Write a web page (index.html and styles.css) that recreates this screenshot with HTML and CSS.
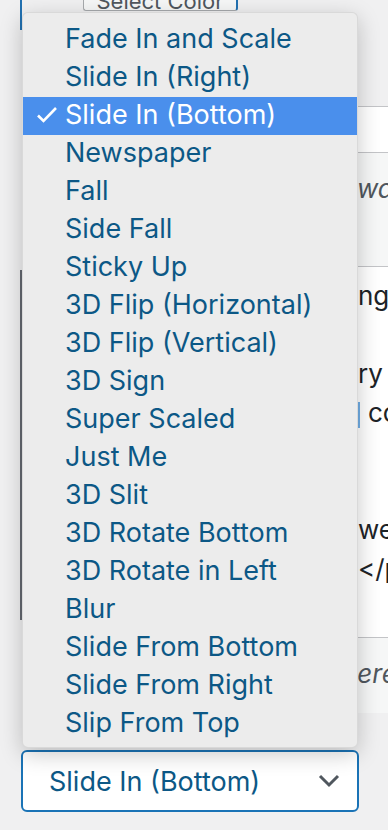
FILE: index.html
```html
<!DOCTYPE html>
<html lang="en">
<head>
  <meta charset="UTF-8">
  <meta name="viewport" content="width=device-width, initial-scale=1.0">
  <title>Popup Animation</title>
  <link rel="stylesheet" href="styles.css">
</head>
<body>
  <div class="screen">
    <div class="toolbar">
      <span class="field-edge"></span>
      <button class="color-btn">Select Color</button>
    </div>
    <div class="spacer"></div>

    <div class="row row-options"></div>

    <div class="row row-note">
      <p class="note">was</p>
    </div>

    <div class="row row-code">
      <div class="code-box">
        <div class="code-line">ng</div>
        <div class="code-line"></div>
        <div class="code-line">ry</div>
        <div class="code-line"><span class="caret"></span>co</div>
        <div class="code-line"></div>
        <div class="code-line"></div>
        <div class="code-line">we</div>
        <div class="code-line">&lt;/p</div>
      </div>
    </div>

    <div class="row row-help">
      <p class="note note-help">here</p>
    </div>

    <div class="picker">
      <span class="picker-value">Slide In (Bottom)</span>
      <svg class="chevron" width="22" height="14" viewBox="0 0 22 14">
        <path d="M2 2 L11 11 L20 2" fill="none" stroke="#50575e" stroke-width="3"/>
      </svg>
    </div>

    <ul class="menu">
      <li>Fade In and Scale</li>
      <li>Slide In (Right)</li>
      <li class="selected">
        <svg class="check" width="22" height="18" viewBox="0 0 22 18">
          <path d="M2 9.5 L7.5 15 L20 2" fill="none" stroke="#fff" stroke-width="2.6"/>
        </svg>Slide In (Bottom)</li>
      <li>Newspaper</li>
      <li>Fall</li>
      <li>Side Fall</li>
      <li>Sticky Up</li>
      <li>3D Flip (Horizontal)</li>
      <li>3D Flip (Vertical)</li>
      <li>3D Sign</li>
      <li>Super Scaled</li>
      <li>Just Me</li>
      <li>3D Slit</li>
      <li>3D Rotate Bottom</li>
      <li>3D Rotate in Left</li>
      <li>Blur</li>
      <li>Slide From Bottom</li>
      <li>Slide From Right</li>
      <li>Slip From Top</li>
    </ul>
  </div>
</body>
</html>
```

FILE: styles.css
```css
body { margin: 0; background: #f0f0f1; font-family: Inter, "Liberation Sans", sans-serif; }

.screen {
  position: relative;
  width: 388px;
  height: 830px;
  overflow: hidden;
  display: flex;
  flex-direction: column;
}

/* top toolbar, mostly hidden behind the menu */
.toolbar { height: 30px; display: flex; align-items: flex-start; margin-left: 20px; }
.field-edge { width: 2px; height: 30px; background: #2271b1; }
.color-btn {
  box-sizing: border-box;
  margin-left: 61px;
  margin-top: -20px;
  width: 155px;
  height: 31px;
  padding: 7px 0 0;
  border: 1px solid #a7aaad;
  border-right: 2px solid #2271b1;
  border-radius: 0 0 3px 3px;
  background: #f6f7f7;
  color: #50575e;
  font-family: inherit;
  font-size: 22px;
  line-height: 26px;
}
.spacer { height: 76px; }

.row { margin-left: 22px; border-top: 1px solid #c3c4c7; box-sizing: border-box; }
.row-options { height: 46px; background: #fff; }
.row-note { height: 114px; background: #f6f7f7; }
.row-code { height: 371px; background: #fff; }
.row-help { height: 76px; background: #f6f7f7; }

.note {
  margin: 20px 0 0;
  padding-left: 335px;
  white-space: nowrap;
  font-style: italic;
  font-size: 26px;
  color: #50575e;
}
.note-help { padding-left: 320px; }

.code-box {
  margin: 3px 0 0 -2px;
  height: 350px;
  border-left: 2px solid #646970;
  box-sizing: border-box;
  padding: 6px 0 0 336px;
  color: #1d2327;
  font-size: 26px;
}
.code-line { height: 39px; line-height: 39px; white-space: nowrap; }
.caret {
  display: inline-block;
  width: 2px;
  height: 26px;
  margin-right: 8px;
  vertical-align: middle;
  background: #72aee6;
}

/* select shown under the open menu */
.picker {
  box-sizing: border-box;
  margin: 37px 0 0 21px;
  width: 338px;
  height: 62px;
  border: 2px solid #1a73b6;
  border-radius: 6px;
  background: #fff;
  display: flex;
  align-items: center;
  justify-content: space-between;
  padding: 0 17px 0 26px;
  color: #0c5886;
  font-size: 27px;
}
.chevron { display: block; }

/* open dropdown list */
.menu {
  position: absolute;
  top: 12px;
  left: 22px;
  width: 336px;
  height: 736px;
  box-sizing: border-box;
  margin: 0;
  padding: 8px 0 0;
  list-style: none;
  background: #ececec;
  border: 1px solid rgba(0,0,0,0.08);
  border-radius: 6px;
  box-shadow: 0 6px 22px rgba(0,0,0,0.22);
  color: #0c5886;
  font-size: 27px;
}
.menu li {
  position: relative;
  height: 38px;
  line-height: 35px;
  padding-left: 42px;
  white-space: nowrap;
}
.menu li.selected { background: #4a8fec; color: #fff; }
.check {
  position: absolute;
  left: 13px;
  top: 9px;
}
```
